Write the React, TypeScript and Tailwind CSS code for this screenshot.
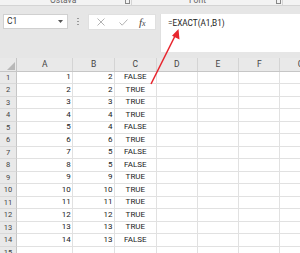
import React from "react";

const cols = [
  { l: "A", w: "w-[56.3px]" },
  { l: "B", w: "w-[41.7px]" },
  { l: "C", w: "w-[41.7px]" },
  { l: "D", w: "w-[41px]" },
  { l: "E", w: "w-[41.6px]" },
  { l: "F", w: "w-[41px]" },
  { l: "G", w: "w-[41.6px]" },
];

const data: [number, number][] = [
  [1, 2], [2, 2], [3, 3], [4, 4], [5, 4], [6, 6], [7, 5],
  [8, 5], [9, 9], [10, 10], [11, 11], [12, 12], [13, 13], [14, 13],
];

export default function App() {
  return (
    <div
      className="relative w-[300px] h-[253px] overflow-hidden bg-[#e6e6e6] text-[#222]"
      style={{ fontFamily: "Roboto, 'Liberation Sans', sans-serif" }}
    >
      {/* ribbon bottom */}
      <div className="h-[6px] bg-[#f3f3f3] border-b border-[#d4d4d4] overflow-hidden flex text-[8.5px] text-[#666] leading-[9px]">
        <div className="w-[132px] relative border-r border-[#d4d4d4]">
          <span className="absolute left-[50px] top-[-4px]">Ostava</span>
          <span className="absolute left-[125px] top-[0px] w-[5px] h-[4px] border border-[#888] border-t-0"></span>
        </div>
        <div className="w-[151px] relative border-r border-[#d4d4d4]">
          <span className="absolute left-[57px] top-[-4px]">Font</span>
          <span className="absolute left-[144px] top-[0px] w-[5px] h-[4px] border border-[#888] border-t-0"></span>
        </div>
      </div>

      {/* formula bar */}
      <div className="flex items-start mt-[8px] h-[38px]">
        <div className="ml-[3px] w-[65px] h-[15px] bg-white border border-[#d0d0d0] flex items-center justify-between pl-[3px] pr-[4px] text-[8.5px] text-[#333]">
          <span>C1</span>
          <svg width="5" height="3" viewBox="0 0 5 3"><path d="M0 0 L5 0 L2.5 3 Z" fill="#555" /></svg>
        </div>
        <div className="w-[20px] h-[15px] flex flex-col items-center justify-center gap-[1.5px]">
          <span className="w-[1.5px] h-[1.5px] bg-[#999]"></span>
          <span className="w-[1.5px] h-[1.5px] bg-[#999]"></span>
          <span className="w-[1.5px] h-[1.5px] bg-[#999]"></span>
        </div>
        <div className="w-[68px] h-[16px] bg-white border border-[#e0e0e0] flex items-center">
          <svg className="ml-[8px]" width="8" height="8" viewBox="0 0 8 8">
            <path d="M0.5 0.5 L7.5 7.5 M7.5 0.5 L0.5 7.5" stroke="#aaa" strokeWidth="0.9" />
          </svg>
          <svg className="ml-[14px]" width="9" height="7" viewBox="0 0 9 7">
            <path d="M0.5 3.5 L3.2 6.2 L8.5 0.5" stroke="#aaa" strokeWidth="0.9" fill="none" />
          </svg>
          <span
            className="ml-[11px] text-[11px] leading-none italic text-[#444]"
            style={{ fontFamily: "'Liberation Serif', serif" }}
          >
            f<span className="text-[8px]">x</span>
          </span>
        </div>
        <div className="ml-[4px] flex-1 h-[38px] bg-white border-l border-[#e0e0e0] pl-[7px] pt-[3px] text-[8.2px] text-[#222]">
          =EXACT(A1,B1)
        </div>
      </div>

      {/* grid */}
      <div className="mt-[6px] bg-white">
        <div className="flex h-[13.7px] bg-[#e9e9e9] border-b border-[#c6c6c6] text-[8.5px] text-[#444]">
          <div className="relative w-[17px] shrink-0 border-r border-[#c6c6c6]">
            <svg className="absolute right-[1px] bottom-[1px]" width="8" height="8" viewBox="0 0 8 8">
              <path d="M8 0 L8 8 L0 8 Z" fill="#b8b8b8" />
            </svg>
          </div>
          {cols.map((c) => (
            <div
              key={c.l}
              className={`${c.w} shrink-0 border-r border-[#d4d4d4] flex items-center justify-center`}
            >
              {c.l}
            </div>
          ))}
        </div>
        {data.map(([a, b], i) => (
          <div key={i} className="flex h-[12.5px] text-[8px] leading-none">
            <div className="w-[17px] shrink-0 bg-[#e9e9e9] border-r border-[#c6c6c6] border-b border-b-[#d9d9d9] flex items-center justify-center text-[#444] text-[7.5px]">
              {i + 1}
            </div>
            <div className="w-[56.3px] shrink-0 border-r border-b border-[#e1e1e1] flex items-center justify-end pr-[1.5px]">{a}</div>
            <div className="w-[41.7px] shrink-0 border-r border-b border-[#e1e1e1] flex items-center justify-end pr-[1.5px]">{b}</div>
            <div className="w-[41.7px] shrink-0 border-r border-b border-[#e1e1e1] flex items-center justify-center">
              {a === b ? "TRUE" : "FALSE"}
            </div>
            <div className="w-[41px] shrink-0 border-r border-b border-[#e1e1e1]"></div>
            <div className="w-[41.6px] shrink-0 border-r border-b border-[#e1e1e1]"></div>
            <div className="w-[41px] shrink-0 border-r border-b border-[#e1e1e1]"></div>
            <div className="w-[41.6px] shrink-0 border-r border-b border-[#e1e1e1]"></div>
          </div>
        ))}
        <div className="flex h-[12.5px] text-[8px] leading-none">
          <div className="w-[17px] shrink-0 bg-[#e9e9e9] border-r border-[#c6c6c6] flex items-start justify-center pt-[2px] text-[#444] text-[7.5px]">
            15
          </div>
          <div className="w-[56.3px] shrink-0 border-r border-[#e1e1e1]"></div>
          <div className="w-[41.7px] shrink-0 border-r border-[#e1e1e1]"></div>
          <div className="w-[41.7px] shrink-0 border-r border-[#e1e1e1]"></div>
          <div className="w-[41px] shrink-0 border-r border-[#e1e1e1]"></div>
          <div className="w-[41.6px] shrink-0 border-r border-[#e1e1e1]"></div>
          <div className="w-[41px] shrink-0 border-r border-[#e1e1e1]"></div>
        </div>
      </div>

      {/* red arrow */}
      <svg className="absolute left-0 top-0 pointer-events-none" width="300" height="253" viewBox="0 0 300 253">
        <line x1="151" y1="84" x2="175.5" y2="35" stroke="#e8262e" strokeWidth="1.6" />
        <path d="M178.5 29 L179.5 39.5 L172 35.8 Z" fill="#e8262e" />
      </svg>
    </div>
  );
}
